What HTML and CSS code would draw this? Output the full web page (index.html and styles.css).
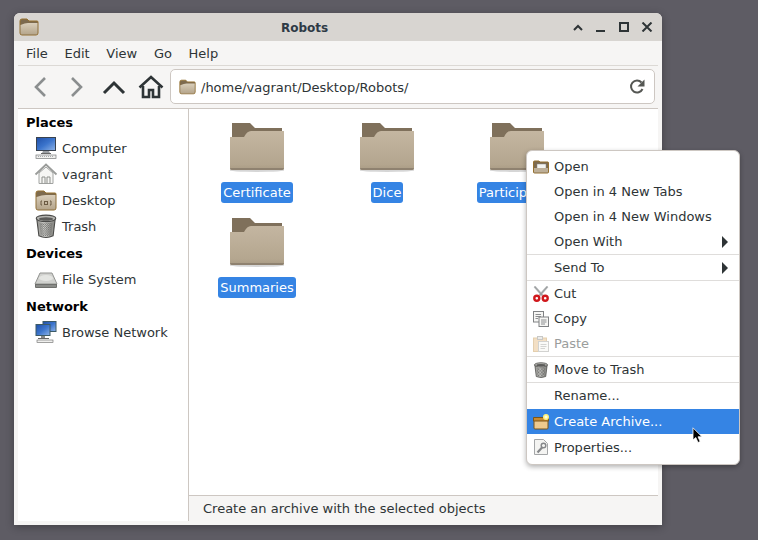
FILE: index.html
```html
<!DOCTYPE html>
<html lang="en">

<head>
  <meta charset="UTF-8" />
  <meta name="viewport" content="width=device-width, initial-scale=1.0" />
  <title>Robots</title>
  <link rel="stylesheet" href="styles.css">
</head>

<body>
  <svg class="defs" width="0" height="0">
    <defs>
      <linearGradient id="gradFront" x1="0" y1="0" x2="0" y2="1">
        <stop offset="0" stop-color="#c4b6a1" />
        <stop offset="0.85" stop-color="#b4a68f" />
        <stop offset="1" stop-color="#a99b84" />
      </linearGradient>
      <linearGradient id="gradSmall" x1="0" y1="0" x2="0" y2="1">
        <stop offset="0" stop-color="#d9ceba" />
        <stop offset="1" stop-color="#b5a58b" />
      </linearGradient>
      <linearGradient id="gradScreen" x1="0" y1="0" x2="1" y2="1">
        <stop offset="0" stop-color="#1f4fa8" />
        <stop offset="0.5" stop-color="#3b74cc" />
        <stop offset="1" stop-color="#8fb4e8" />
      </linearGradient>
      <linearGradient id="gradCan" x1="0" y1="0" x2="1" y2="0">
        <stop offset="0" stop-color="#8a8a86" />
        <stop offset="0.4" stop-color="#dcdcd8" />
        <stop offset="1" stop-color="#7c7c78" />
      </linearGradient>
      <pattern id="mesh" width="2" height="2" patternUnits="userSpaceOnUse">
        <rect width="1" height="1" fill="#4c4c4a" opacity="0.7" />
        <rect x="1" y="1" width="1" height="1" fill="#4c4c4a" opacity="0.7" />
      </pattern>
      <symbol id="folderBig" viewBox="0 0 54 50">
        <ellipse cx="27" cy="47" rx="29" ry="2" fill="#000" opacity="0.16" />
        <path d="M2 0H20L25 5H52V16H2Z" fill="#7f705b" />
        <path d="M0 14H14Q17 8 21 8H54V45Q54 47 52 47H2Q0 47 0 45Z" fill="url(#gradFront)" />
        <path d="M0 45H54Q54 47 52 47H2Q0 47 0 45Z" fill="#8f8270" />
      </symbol>
      <symbol id="folderSmall" viewBox="0 0 20 18">
        <path d="M1 3Q1 1 3 1H8L10 3H18Q19 3 19 4V15Q19 17 17 17H3Q1 17 1 15Z" fill="#7d6a4e" stroke="#96712f" />
        <path d="M1.500 7Q6 5 9 5H18.500V15Q18.500 16.500 17 16.500H3Q1.500 16.500 1.500 15Z" fill="url(#gradSmall)" />
      </symbol>
      <symbol id="trash" viewBox="0 0 20 22">
        <path d="M1.500 4L3.500 20Q10 23 16.500 20L18.500 4Z" fill="url(#gradCan)" stroke="#4a4a48" />
        <path d="M4 8L5 19.500Q10 21.500 15 19.500L16 8Z" fill="url(#mesh)" />
        <ellipse cx="10" cy="4" rx="9" ry="3" fill="#b4b4b0" stroke="#4a4a48" />
        <ellipse cx="10" cy="4.500" rx="6.500" ry="1.600" fill="#5c5c5a" />
      </symbol>
    </defs>
  </svg>

  <div class="window">
    <div class="titlebar">
      <svg class="title-icon"><use href="#folderSmall" /></svg>
      <span class="title">Robots</span>
      <div class="wm-buttons">
        <svg width="12" height="10" viewBox="0 0 12 10"><path d="M2 8L6 4L10 8" fill="none" stroke="#2e3436" stroke-width="2" /></svg>
        <svg width="12" height="10" viewBox="0 0 12 10"><path d="M1 9H10" stroke="#2e3436" stroke-width="2" /></svg>
        <svg width="12" height="10" viewBox="0 0 12 10"><rect x="2" y="1" width="8" height="8" fill="none" stroke="#2e3436" stroke-width="2" /></svg>
        <svg width="12" height="10" viewBox="0 0 12 10"><path d="M1.500 .5L10.500 9.500M10.500 .5L1.500 9.500" stroke="#2e3436" stroke-width="2" /></svg>
      </div>
    </div>

    <div class="content">
      <div class="menubar">
        <span>File</span><span>Edit</span><span>View</span><span>Go</span><span>Help</span>
      </div>

      <div class="toolbar">
        <div class="nav-buttons">
          <svg width="16" height="22" viewBox="0 0 16 22"><path d="M13 2L4 11L13 20" fill="none" stroke="#8b8e8f" stroke-width="2.600" /></svg>
          <svg width="16" height="22" viewBox="0 0 16 22"><path d="M3 2L12 11L3 20" fill="none" stroke="#8b8e8f" stroke-width="2.600" /></svg>
          <svg width="24" height="16" viewBox="0 0 24 16"><path d="M2 14L12 4L22 14" fill="none" stroke="#2e3436" stroke-width="3" /></svg>
          <svg width="26" height="24" viewBox="0 0 26 24"><path d="M1.500 12.500L13 2L24.500 12.500" fill="none" stroke="#2e3436" stroke-width="2.600" /><path d="M5 11V22H11V15H15V22H21V11" fill="none" stroke="#2e3436" stroke-width="2.600" /></svg>
        </div>
        <div class="address">
          <svg class="addr-icon"><use href="#folderSmall" /></svg>
          <span class="addr-text">/home/vagrant/Desktop/Robots/</span>
          <svg class="reload" width="18" height="18" viewBox="0 0 18 18"><path d="M14.500 11A6 6 0 1 1 13.500 4.500" fill="none" stroke="#555753" stroke-width="2" /><path d="M16.500 1.500V8.500H9.500Z" fill="#555753" /></svg>
        </div>
      </div>

      <div class="panes">
        <aside class="sidebar">
          <h2>Places</h2>
          <div class="place">
            <svg width="24" height="24" viewBox="0 0 24 24"><rect x="2.500" y="1.500" width="19" height="13" fill="url(#gradScreen)" stroke="#39424e" /><path d="M9 15H15L16 17H8Z" fill="#9a9ea2" /><rect x="7" y="17" width="10" height="1" fill="#666" /><rect x="2" y="19" width="20" height="3.500" fill="#f0f0ee" stroke="#77797b" stroke-width="0.700" /><path d="M4 20.500H20" stroke="#a8aaac" stroke-dasharray="1 1" /></svg>
            <span>Computer</span>
          </div>
          <div class="place">
            <svg width="24" height="24" viewBox="0 0 24 24"><path d="M5 11V21.500H19V11L12 5Z" fill="#f6f6f4" stroke="#a2a4a2" /><path d="M1.500 12.500L12 2.500L22.500 12.500" fill="none" stroke="#9a9c9a" stroke-width="1.800" /><path d="M8 21.500V15H11V21.500M13 21.500V15H16V21.500" fill="none" stroke="#8e908c" /></svg>
            <span>vagrant</span>
          </div>
          <div class="place">
            <svg width="24" height="24" viewBox="0 0 24 24"><path d="M2 5Q2 3 4 3H10L12 5H21Q22 5 22 6V20Q22 22 20 22H4Q2 22 2 20Z" fill="#7d6a4e" stroke="#96712f" /><path d="M2.500 9Q8 7 12 7H21.500V20Q21.500 21.500 20 21.500H4Q2.500 21.500 2.500 20Z" fill="url(#gradSmall)" /><path d="M8 13H7V17H8M16 13H17V17H16" fill="none" stroke="#6b5a42" /><rect x="10.500" y="13.500" width="3" height="3" fill="none" stroke="#6b5a42" /></svg>
            <span>Desktop</span>
          </div>
          <div class="place">
            <svg width="24" height="24"><use href="#trash" /></svg>
            <span>Trash</span>
          </div>
          <h2>Devices</h2>
          <div class="place">
            <svg width="24" height="24" viewBox="0 0 24 24"><path d="M6 6H18L23 17H1Z" fill="#d0d1ce" stroke="#939491" /><path d="M1 17H23V20Q23 21 22 21H2Q1 21 1 20Z" fill="#6f706d" /><ellipse cx="12" cy="11" rx="7" ry="3" fill="#e4e5e2" /><path d="M2 19H22" stroke="#a6a7a4" /></svg>
            <span>File System</span>
          </div>
          <h2>Network</h2>
          <div class="place">
            <svg width="24" height="24" viewBox="0 0 24 24"><rect x="9" y="1.500" width="13" height="10" fill="url(#gradScreen)" stroke="#3c5a66" /><rect x="2" y="4.500" width="14" height="11" fill="url(#gradScreen)" stroke="#3c5a66" /><rect x="7" y="16" width="4" height="2" fill="#888" /><rect x="4" y="18" width="11" height="1" fill="#666" /><rect x="3" y="20" width="16" height="2.500" fill="#f0f0ee" stroke="#666" stroke-width="0.600" /></svg>
            <span>Browse Network</span>
          </div>
        </aside>

        <div class="main">
          <div class="files">
            <div class="file">
              <svg class="folder"><use href="#folderBig" /></svg>
              <span class="file-label">Certificate</span>
            </div>
            <div class="file">
              <svg class="folder"><use href="#folderBig" /></svg>
              <span class="file-label">Dice</span>
            </div>
            <div class="file">
              <svg class="folder"><use href="#folderBig" /></svg>
              <span class="file-label">Participants</span>
            </div>
            <div class="file">
              <svg class="folder"><use href="#folderBig" /></svg>
              <span class="file-label">Summaries</span>
            </div>
          </div>
          <div class="statusbar">Create an archive with the selected objects</div>
        </div>
      </div>
    </div>
  </div>

  <div class="context-menu">
    <div class="item">
      <svg class="item-icon" viewBox="0 0 16 16"><path d="M.5 3Q.5 2 1.500 2H6L7 3H15Q15.500 3 15.500 4V13Q15.500 14 14.500 14H1.500Q.5 14 .5 13Z" fill="#7d6a4e" stroke="#96712f" /><rect x="4" y="5" width="9" height="5" fill="#f4f4f0" stroke="#888" stroke-width="0.500" /><path d="M1 9H15V13Q15 13.500 14 13.500H2Q1 13.500 1 13Z" fill="#bdaf98" /></svg>
      <span>Open</span>
    </div>
    <div class="item"><span class="no-icon">Open in 4 New Tabs</span></div>
    <div class="item"><span class="no-icon">Open in 4 New Windows</span></div>
    <div class="item"><span class="no-icon">Open With</span><i class="arrow"></i></div>
    <div class="sep"></div>
    <div class="item"><span class="no-icon">Send To</span><i class="arrow"></i></div>
    <div class="sep"></div>
    <div class="item">
      <svg class="item-icon" viewBox="0 0 16 16"><path d="M1.500 .5L9.500 9.500M14.500 .5L6.500 9.500" stroke="#b4b7b8" stroke-width="2.200" /><path d="M1.500 .5L9.500 9.500M14.500 .5L6.500 9.500" stroke="#7c7f80" stroke-width="0.500" /><circle cx="3.800" cy="12.300" r="2.500" fill="#fff" stroke="#d0181c" stroke-width="2.400" /><circle cx="12.200" cy="12.300" r="2.500" fill="#fff" stroke="#d0181c" stroke-width="2.400" /></svg>
      <span>Cut</span>
    </div>
    <div class="item">
      <svg class="item-icon" viewBox="0 0 16 16"><rect x=".5" y=".5" width="10" height="10.500" fill="#f6f6f4" stroke="#808284" /><rect x="6" y="6" width="9.500" height="9.500" fill="#f6f6f4" stroke="#808284" /><path d="M2.500 3.500H8M2.500 5.500H8M2.500 7.500H5M8 9H13.500M8 11H13.500M8 13H12" stroke="#808284" stroke-width="0.900" /></svg>
      <span>Copy</span>
    </div>
    <div class="item disabled">
      <svg class="item-icon" viewBox="0 0 16 16"><rect x=".5" y="2" width="13" height="13.500" fill="#f3dfc4" stroke="#e4cfae" /><rect x="4.500" y=".5" width="5" height="3" fill="#ececea" stroke="#c8c8c6" /><rect x="5.500" y="5.500" width="10" height="10" fill="#fafaf8" stroke="#d2d2d0" /><path d="M7.500 8.500H13.500M7.500 10.500H13.500M7.500 12.500H12" stroke="#cfcfcd" stroke-width="0.900" /></svg>
      <span>Paste</span>
    </div>
    <div class="sep"></div>
    <div class="item">
      <svg class="item-icon"><use href="#trash" /></svg>
      <span>Move to Trash</span>
    </div>
    <div class="sep"></div>
    <div class="item"><span class="no-icon">Rename...</span></div>
    <div class="item active">
      <svg class="item-icon" viewBox="0 0 16 16"><path d="M1 6H15V14Q15 15 14 15H2Q1 15 1 14Z" fill="#edc98e" stroke="#7a5518" /><path d="M.5 3.500H15.500V7H.5Z" fill="#c98a2e" stroke="#7a5518" /><circle cx="13" cy="3" r="3" fill="#fff27a" /><circle cx="13" cy="3" r="1.500" fill="#fffde0" /></svg>
      <span>Create Archive...</span>
    </div>
    <div class="item">
      <svg class="item-icon" viewBox="0 0 16 16"><path d="M1.500 .5H10.500L14.500 4.500V15.500H1.500Z" fill="#f4f4f2" stroke="#a4a6a8" /><path d="M4.500 13.500L9.500 8" stroke="#85878a" stroke-width="2.200" /><circle cx="10.500" cy="6.500" r="2.300" fill="none" stroke="#85878a" stroke-width="1.400" /></svg>
      <span class="props">Properties...</span>
    </div>
  </div>

  <svg class="cursor" width="12" height="17" viewBox="0 0 12 17"><path d="M1 .8V13L3.800 10.500L6 15.500L8.200 14.500L6 9.800H10Z" fill="#000" stroke="#fff" stroke-width="0.800" /></svg>
</body>

</html>
```

FILE: styles.css
```css
* {
  box-sizing: border-box;
}

body {
  margin: 0;
  padding: 13px 0 0 14px;
  height: 540px;
  overflow: hidden;
  background-color: #5e5c64;
  font-family: "DejaVu Sans", sans-serif;
  font-size: 13px;
  color: #2e3436;
}

.defs {
  display: block;
  position: absolute;
}

.window {
  display: flex;
  flex-direction: column;
  width: 648px;
  height: 512px;
  border-radius: 6px 6px 0 0;
  background-color: #f6f5f4;
  box-shadow: 0 2px 8px rgba(0, 0, 0, 0.3);
  overflow: hidden;
}

.titlebar {
  display: flex;
  align-items: center;
  flex: 0 0 28px;
  padding: 0 9px 0 5px;
  background-color: #d8d5d1;
}

.title-icon {
  width: 20px;
  height: 18px;
}

.title {
  flex: 1;
  padding: 2px 2px 0 0;
  text-align: center;
  font-weight: bold;
  font-size: 12px;
  color: #2e3a46;
}

.wm-buttons {
  display: flex;
  gap: 11px;
  align-items: center;
}

.content {
  display: flex;
  flex-direction: column;
  flex: 1;
  min-height: 0;
  padding: 0 4px 4px 4px;
}

.menubar {
  display: flex;
  gap: 16.7px;
  height: 25px;
  padding: 0 0 0 8px;
  align-items: center;
  border-bottom: 1px solid #dcd9d5;
}

.toolbar {
  display: flex;
  align-items: center;
  height: 43px;
  padding: 0 3px 1px 14px;
  border-bottom: 1px solid #cdc7c2;
}

.nav-buttons {
  display: flex;
  align-items: center;
  margin-right: 6px;
}

.nav-buttons svg:nth-child(1) {
  margin-right: 21px;
}

.nav-buttons svg:nth-child(2) {
  margin-right: 17px;
}

.nav-buttons svg:nth-child(3) {
  margin-right: 12px;
}

.address {
  display: flex;
  align-items: center;
  flex: 1;
  height: 35px;
  padding: 0 8px;
  background-color: #fff;
  border: 1px solid #cdc7c2;
  border-radius: 5px;
}

.addr-icon {
  width: 17px;
  height: 16px;
}

.addr-text {
  flex: 1;
  padding-top: 1px;
  margin-left: 5px;
}

.panes {
  display: flex;
  flex: 1;
  min-height: 0;
}

.sidebar {
  width: 171px;
  padding: 5px 0 0 8px;
  background-color: #fff;
  border-right: 1px solid #cdc7c2;
}

.sidebar h2 {
  margin: 0;
  height: 17px;
  line-height: 17px;
  font-size: 13px;
  font-weight: bold;
  color: #000;
}

.sidebar h2 + .place {
  margin-top: 4px;
}

.place + h2 {
  margin-top: 6px;
}

.place {
  display: flex;
  align-items: center;
  gap: 4px;
  height: 26px;
  padding-left: 8px;
}

.place svg {
  flex: 0 0 24px;
  width: 24px;
  height: 24px;
}

.main {
  display: flex;
  flex-direction: column;
  flex: 1;
  min-width: 0;
}

.files {
  display: grid;
  grid-template-columns: repeat(3, 130px);
  grid-auto-rows: 95px;
  align-content: start;
  flex: 1;
  padding: 14px 0 0 3px;
  background-color: #fff;
}

.file {
  display: flex;
  flex-direction: column;
  align-items: center;
}

.folder {
  width: 54px;
  height: 50px;
}

.file-label {
  margin-top: 9px;
  padding: 3px 2px 2px;
  line-height: 16px;
  color: #fff;
  background-color: #3584e4;
  border-radius: 3px;
}

.statusbar {
  flex: 0 0 26px;
  display: flex;
  align-items: center;
  padding-left: 14px;
  background-color: #f6f5f4;
  border-top: 1px solid #cdc7c2;
}

.context-menu {
  position: absolute;
  left: 526px;
  top: 150px;
  width: 214px;
  height: 315px;
  padding: 3px 0;
  background-color: #fff;
  border: 1px solid #cdc7c2;
  border-radius: 6px;
  box-shadow: 0 2px 5px rgba(0, 0, 0, 0.3);
}

.item {
  display: flex;
  align-items: center;
  gap: 5px;
  height: 25px;
  padding: 0 11px 0 6px;
  color: #2e3436;
}

.item-icon {
  flex: 0 0 16px;
  width: 16px;
  height: 16px;
}

.no-icon {
  margin-left: 21px;
}

.props {
  padding-top: 1px;
}

.disabled {
  color: #9a9d9c;
}

.active {
  margin-top: 1px;
  color: #fff;
  background-color: #3584e4;
}

.sep {
  height: 1px;
  background-color: #dfdddb;
}

.arrow {
  margin-left: auto;
  border-left: 6px solid #2e3436;
  border-top: 6px solid transparent;
  border-bottom: 6px solid transparent;
}

.cursor {
  position: absolute;
  left: 692px;
  top: 427px;
}
```
